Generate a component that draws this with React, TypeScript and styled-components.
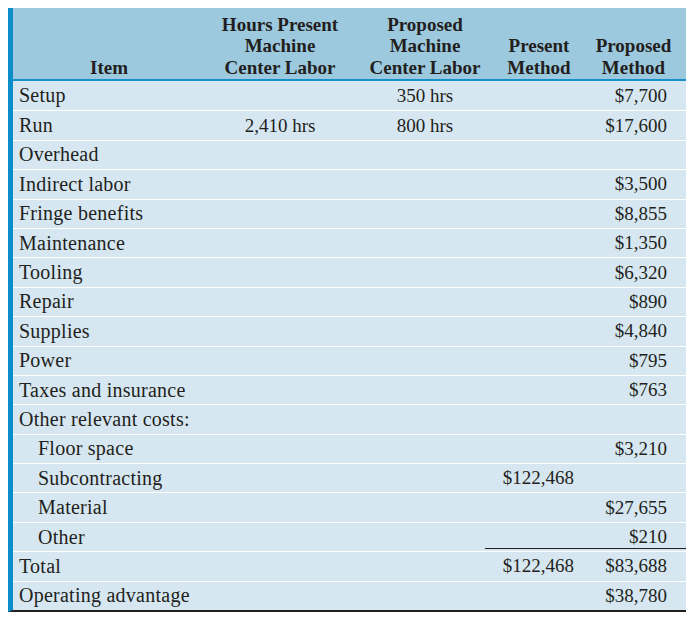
import React from "react";
import styled, { createGlobalStyle } from "styled-components";

const GlobalStyle = createGlobalStyle`
  html, body { background: #ffffff; }
  body {
    margin: 8px;
    font-family: "Liberation Serif", "Times New Roman", serif;
    color: #231f20;
  }
  * { box-sizing: border-box; }
`;

const COLS = "192px 150px 130px 96px 105px";

const Table = styled.div`
  width: 678px;
  border-left: 5px solid #0a8dc9;
  border-bottom: 2px solid #231f20;
`;

const HeaderRow = styled.div`
  display: grid;
  grid-template-columns: ${COLS};
  align-items: end;
  height: 73px;
  padding-bottom: 1px;
  background: #9dc9df;
  border-bottom: 2px solid #1590ca;
  font-weight: bold;
  font-size: 19px;
  line-height: 21.5px;
`;

const HeadCell = styled.div<{ $shift?: number }>`
  text-align: center;
  padding-left: ${(p) => p.$shift ?? 0}px;
  white-space: nowrap;
`;

const Row = styled.div`
  display: grid;
  grid-template-columns: ${COLS};
  height: 29.4px;
  background: #d6e7f1;
  border-top: 1px solid #ffffff;
  font-size: 19px;
  &:first-of-type { border-top: none; }
`;

const ItemCell = styled.div<{ $indent?: boolean }>`
  display: flex;
  align-items: center;
  padding-left: ${(p) => (p.$indent ? 25 : 6)}px;
  font-size: 20px;
  letter-spacing: 0.25px;
  white-space: nowrap;
`;

const CenterCell = styled.div<{ $shift?: number }>`
  display: flex;
  align-items: center;
  justify-content: center;
  padding-left: ${(p) => p.$shift ?? 0}px;
  white-space: nowrap;
`;

const RightCell = styled.div<{ $pad: number; $rule?: boolean }>`
  display: flex;
  align-items: center;
  justify-content: flex-end;
  padding-right: ${(p) => p.$pad}px;
  white-space: nowrap;
  ${(p) =>
    p.$rule
      ? `border-bottom: 1px solid #231f20; margin-bottom: 2px; padding-top: 2px;`
      : ""}
`;

type RowData = {
  item: string;
  indent?: boolean;
  hrsPresent?: string;
  hrsProposed?: string;
  present?: string;
  proposed?: string;
  rule?: boolean;
};

const rows: RowData[] = [
  { item: "Setup", hrsProposed: "350 hrs", proposed: "$7,700" },
  { item: "Run", hrsPresent: "2,410 hrs", hrsProposed: "800 hrs", proposed: "$17,600" },
  { item: "Overhead" },
  { item: "Indirect labor", proposed: "$3,500" },
  { item: "Fringe benefits", proposed: "$8,855" },
  { item: "Maintenance", proposed: "$1,350" },
  { item: "Tooling", proposed: "$6,320" },
  { item: "Repair", proposed: "$890" },
  { item: "Supplies", proposed: "$4,840" },
  { item: "Power", proposed: "$795" },
  { item: "Taxes and insurance", proposed: "$763" },
  { item: "Other relevant costs:" },
  { item: "Floor space", indent: true, proposed: "$3,210" },
  { item: "Subcontracting", indent: true, present: "$122,468" },
  { item: "Material", indent: true, proposed: "$27,655" },
  { item: "Other", indent: true, proposed: "$210", rule: true },
  { item: "Total", present: "$122,468", proposed: "$83,688" },
  { item: "Operating advantage", proposed: "$38,780" },
];

export default function App() {
  return (
    <>
      <GlobalStyle />
      <Table>
        <HeaderRow>
          <HeadCell>Item</HeadCell>
          <HeadCell>
            Hours Present
            <br />
            Machine
            <br />
            Center Labor
          </HeadCell>
          <HeadCell $shift={10}>
            Proposed
            <br />
            Machine
            <br />
            Center Labor
          </HeadCell>
          <HeadCell $shift={12}>
            Present
            <br />
            Method
          </HeadCell>
          <HeadCell>
            Proposed
            <br />
            Method
          </HeadCell>
        </HeaderRow>
        <div>
          {rows.map((r) => (
            <Row key={r.item}>
              <ItemCell $indent={r.indent}>{r.item}</ItemCell>
              <CenterCell>{r.hrsPresent ?? ""}</CenterCell>
              <CenterCell $shift={10}>{r.hrsProposed ?? ""}</CenterCell>
              <RightCell $pad={7} $rule={r.rule}>
                {r.present ?? ""}
              </RightCell>
              <RightCell $pad={19} $rule={r.rule}>
                {r.proposed ?? ""}
              </RightCell>
            </Row>
          ))}
        </div>
      </Table>
    </>
  );
}
